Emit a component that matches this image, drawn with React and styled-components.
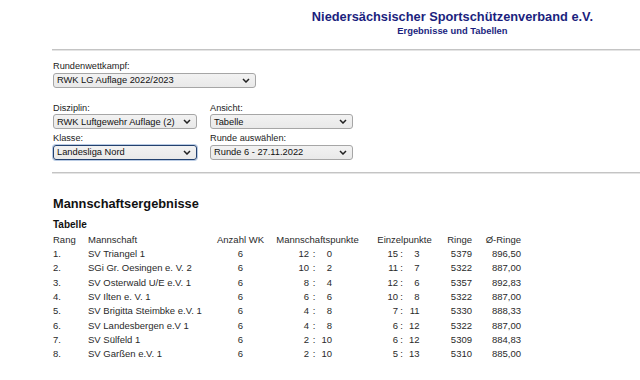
import React from "react";
import styled, { createGlobalStyle } from "styled-components";

const GlobalStyle = createGlobalStyle`
  body {
    margin: 0;
    background: #fff;
    font-family: "Liberation Sans", Arial, sans-serif;
    color: #222;
  }
`;

const teams = [
  { rang: "1.", name: "SV Triangel 1", wk: 6, mp: [12, 0], ep: [15, 3], ringe: 5379, avg: "896,50" },
  { rang: "2.", name: "SGi Gr. Oesingen e. V. 2", wk: 6, mp: [10, 2], ep: [11, 7], ringe: 5322, avg: "887,00" },
  { rang: "3.", name: "SV Osterwald U/E e.V. 1", wk: 6, mp: [8, 4], ep: [12, 6], ringe: 5357, avg: "892,83" },
  { rang: "4.", name: "SV Ilten e. V. 1", wk: 6, mp: [6, 6], ep: [10, 8], ringe: 5322, avg: "887,00" },
  { rang: "5.", name: "SV Brigitta Steimbke e.V. 1", wk: 6, mp: [4, 8], ep: [7, 11], ringe: 5330, avg: "888,33" },
  { rang: "6.", name: "SV Landesbergen e.V 1", wk: 6, mp: [4, 8], ep: [6, 12], ringe: 5322, avg: "887,00" },
  { rang: "7.", name: "SV Sülfeld 1", wk: 6, mp: [2, 10], ep: [6, 12], ringe: 5309, avg: "884,83" },
  { rang: "8.", name: "SV Garßen e.V. 1", wk: 6, mp: [2, 10], ep: [5, 13], ringe: 5310, avg: "885,00" },
];

const Chevron = () => (
  <svg width="8" height="5" viewBox="0 0 8 5">
    <path d="M1 1 L4 4 L7 1" fill="none" stroke="#222" strokeWidth="1.5" />
  </svg>
);

const Select = ({ value, width, focused }) => (
  <SelectBox $width={width} $focused={focused}>
    <span>{value}</span>
    <Chevron />
  </SelectBox>
);

const Pair = ({ a, b, left, colon, right }) => (
  <PairWrap>
    <PairNum $w={left}>{a}</PairNum>
    <PairColon $w={colon}>:</PairColon>
    <PairNum $w={right}>{b}</PairNum>
  </PairWrap>
);

const App = () => {
  return (
    <>
      <GlobalStyle />
      <Header>
        <Brand>
          <BrandTitle>Niedersächsischer Sportschützenverband e.V.</BrandTitle>
          <BrandSub>Ergebnisse und Tabellen</BrandSub>
        </Brand>
      </Header>
      <Main>
        <Rule />
        <Form>
          <Field>
            <Label>Rundenwettkampf:</Label>
            <Select value="RWK LG Auflage 2022/2023" width={203} />
          </Field>
          <FieldGrid>
            <Field>
              <Label>Disziplin:</Label>
              <Select value="RWK Luftgewehr Auflage (2)" />
            </Field>
            <Field>
              <Label>Ansicht:</Label>
              <Select value="Tabelle" />
            </Field>
            <Field>
              <Label>Klasse:</Label>
              <Select value="Landesliga Nord" focused />
            </Field>
            <Field>
              <Label>Runde auswählen:</Label>
              <Select value="Runde 6 - 27.11.2022" />
            </Field>
          </FieldGrid>
        </Form>
        <Rule />
        <SectionTitle>Mannschaftsergebnisse</SectionTitle>
        <Caption>Tabelle</Caption>
        <Table>
          <Cell>Rang</Cell>
          <Cell>Mannschaft</Cell>
          <Cell $align="center">Anzahl WK</Cell>
          <Cell $align="center">Mannschaftspunkte</Cell>
          <Cell $align="center">Einzelpunkte</Cell>
          <Cell $align="right">Ringe</Cell>
          <Cell $align="right">Ø-Ringe</Cell>
          {teams.map((t) => (
            <React.Fragment key={t.rang}>
              <Cell>{t.rang}</Cell>
              <Cell>{t.name}</Cell>
              <Cell $align="center">{t.wk}</Cell>
              <Cell>
                <Pair a={t.mp[0]} b={t.mp[1]} left={42} colon={10} right={13} />
              </Cell>
              <Cell>
                <Pair a={t.ep[0]} b={t.ep[1]} left={30} colon={7} right={14.5} />
              </Cell>
              <Cell $align="right">{t.ringe}</Cell>
              <Cell $align="right">{t.avg}</Cell>
            </React.Fragment>
          ))}
        </Table>
      </Main>
    </>
  );
};

const Header = styled.header`
  display: flex;
  justify-content: flex-end;
  padding: 9px 47px 0 0;
`;

const Brand = styled.div`
  text-align: center;
  color: #1b1f7e;
  font-weight: bold;
`;

const BrandTitle = styled.div`
  font-size: 12.8px;
  line-height: 15.6px;
`;

const BrandSub = styled.div`
  font-size: 9.4px;
  line-height: 12px;
`;

const Main = styled.main`
  padding-left: 52px;
`;

const Rule = styled.div`
  height: 0;
  border-top: 1px solid #c4c4c4;
  border-bottom: 1px solid #e4e4e4;
  margin-top: 12.5px;
`;

const Form = styled.div`
  padding: 9px 0 0 1px;
`;

const Field = styled.div`
  display: flex;
  flex-direction: column;
  align-items: flex-start;
`;

const FieldGrid = styled.div`
  display: grid;
  grid-template-columns: 144px 143px;
  column-gap: 13px;
  row-gap: 3.4px;
  margin-top: 14px;
`;

const Label = styled.div`
  font-size: 9.2px;
  line-height: 12px;
  color: #222;
`;

const SelectBox = styled.div`
  box-sizing: border-box;
  width: ${(p) => (p.$width ? `${p.$width}px` : "100%")};
  height: 15px;
  margin-top: 0.5px;
  display: flex;
  align-items: center;
  justify-content: space-between;
  padding: 0 5px 0 3px;
  border: 1px solid ${(p) => (p.$focused ? "#23416e" : "#a6a6a6")};
  border-radius: 3px;
  background: linear-gradient(#f2f2f2, #e9e9e9);
  box-shadow: ${(p) => (p.$focused ? "0 0 0 1px #b9cbe4" : "none")};
  font-size: 9.3px;
  color: #111;
  white-space: nowrap;
`;

const SectionTitle = styled.h2`
  margin: 21.8px 0 0 1px;
  font-size: 12.8px;
  line-height: 16px;
  font-weight: bold;
  color: #111;
`;

const Caption = styled.div`
  margin: 6.2px 0 0 1px;
  font-size: 10px;
  line-height: 14.3px;
  font-weight: bold;
  color: #111;
`;

const Table = styled.div`
  display: grid;
  grid-template-columns: 35px 126px 53px 101px 73px 31px 49px;
  grid-auto-rows: 14.3px;
  margin-left: 1px;
  font-size: 9.5px;
  line-height: 14.3px;
  color: #2a2a2a;
`;

const Cell = styled.div`
  text-align: ${(p) => p.$align || "left"};
  white-space: nowrap;
`;

const PairWrap = styled.div`
  display: flex;
`;

const PairNum = styled.span`
  width: ${(p) => p.$w}px;
  text-align: right;
`;

const PairColon = styled.span`
  width: ${(p) => p.$w}px;
  text-align: center;
`;

export default App;
